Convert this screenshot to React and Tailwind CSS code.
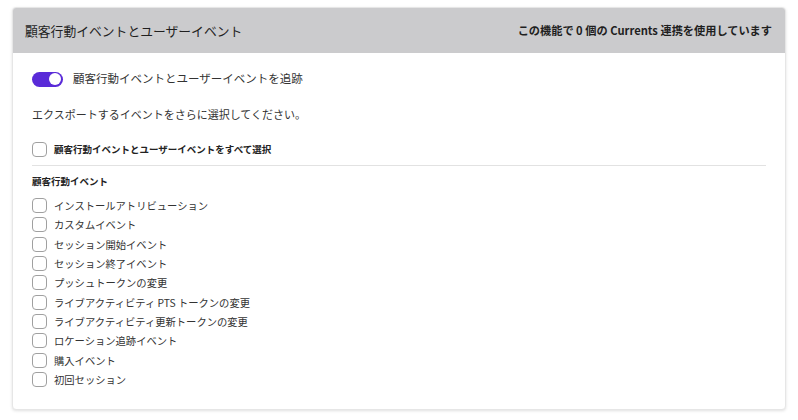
import React from "react";

const items = [
  "インストールアトリビューション",
  "カスタムイベント",
  "セッション開始イベント",
  "セッション終了イベント",
  "プッシュトークンの変更",
  "ライブアクティビティ PTS トークンの変更",
  "ライブアクティビティ更新トークンの変更",
  "ロケーション追跡イベント",
  "購入イベント",
  "初回セッション",
];

function Box() {
  return <span className="inline-block w-[15px] h-[15px] rounded-[4px] border border-[#a0a0a0] bg-white shrink-0" />;
}

export default function App() {
  return (
    <div
      className="w-[798px] h-[420px] bg-white pt-[7px] pl-[12px]"
      style={{ fontFamily: '"Noto Sans CJK JP", "Noto Sans", sans-serif' }}
    >
      <div className="w-[774px] h-[403px] rounded-[4px] border border-[#e6e6e6] shadow-[0_1px_3px_rgba(0,0,0,0.12)] overflow-hidden bg-white">
        <div className="h-[45px] bg-[#cbcbcd] flex items-center justify-between pl-[12px] pr-[13px]">
          <span className="text-[12.8px] text-[#1f1f1f]">顧客行動イベントとユーザーイベント</span>
          <span className="text-[11.2px] font-bold text-[#1f1f1f]">この機能で 0 個の Currents 連携を使用しています</span>
        </div>
        <div className="px-[19px] pt-[18px]">
          <div className="flex items-center h-[16px] gap-[10px]">
            <span className="relative inline-block w-[31px] h-[15px] rounded-full bg-[#5a2bd8]">
              <span className="absolute right-[2px] top-[1.5px] w-[12px] h-[12px] rounded-full bg-white" />
            </span>
            <span className="text-[11.5px] text-[#333]">顧客行動イベントとユーザーイベントを追跡</span>
          </div>
          <div className="mt-[18px] h-[18px] flex items-center text-[11px] text-[#333]">
            エクスポートするイベントをさらに選択してください。
          </div>
          <div className="mt-[18px] flex items-center h-[16px] gap-[7px]">
            <Box />
            <span className="text-[9.5px] font-bold text-[#222]">顧客行動イベントとユーザーイベントをすべて選択</span>
          </div>
          <div className="mt-[8px] h-px bg-[#e2e2e2] w-[734px]" />
          <div className="mt-[8px] h-[14px] flex items-center text-[9.5px] font-bold text-[#222]">顧客行動イベント</div>
          <div className="mt-[8px] flex flex-col">
            {items.map((t) => (
              <div key={t} className="flex items-center h-[19.33px] gap-[7px]">
                <Box />
                <span className="text-[10.3px] text-[#333]">{t}</span>
              </div>
            ))}
          </div>
        </div>
      </div>
    </div>
  );
}
